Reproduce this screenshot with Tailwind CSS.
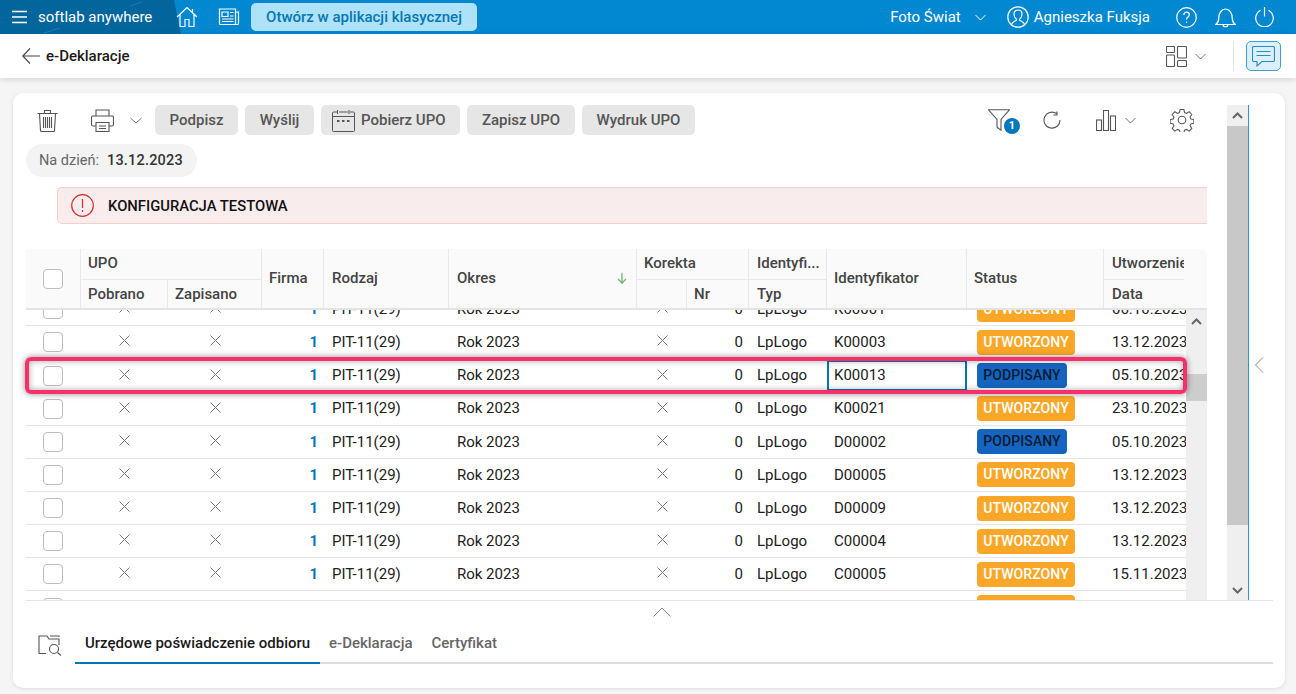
<!DOCTYPE html>
<html lang="pl">
<head>
    <meta charset="UTF-8">
    <title>e-Deklaracje</title>
    <script src="https://cdn.jsdelivr.net/npm/@tailwindcss/browser@4"></script>
</head>
<body class="font-['Roboto',sans-serif] bg-[#f5f5f5] h-[694px] overflow-hidden text-[#212121] text-[15px]">
    <!-- top bar -->
    <header class="relative h-[34px] bg-[#0288d1] text-white flex items-center overflow-hidden">
        <div class="absolute inset-y-0 left-0 w-[181px] bg-[#02669d] [clip-path:polygon(0_0,174px_0,181px_100%,0_100%)]"></div>
        <svg class="absolute left-0 top-0 w-[181px] h-[34px]" fill="none" stroke="#ffffff" stroke-opacity=".12" stroke-width="1"><path d="M142 2l-12 4M60 28l-16 5"/></svg>
        <div class="relative flex items-center w-full">
            <svg class="w-[16px] h-[14px] ml-[12px]" fill="none" stroke="currentColor" stroke-width="1.6" viewBox="0 0 16 14"><path d="M0 1.5h15M0 7h15M0 12.5h15"/></svg>
            <span class="ml-[10px] w-[138px] text-[15px]">softlab anywhere</span>
            <svg class="w-[22px] h-[22px]" fill="none" stroke="currentColor" stroke-width="1.2" viewBox="0 0 22 22"><path d="M1 11L11 1.5 21 11M4 8.500V20.500H9V13.500H13V20.500H18V8.500M16.500 3V6"/></svg>
            <svg class="ml-[20px] w-[22px] h-[18px]" fill="none" stroke="currentColor" stroke-width="1.2" viewBox="0 0 22 18"><path d="M1.500 1h16v15.500h-15a1 1 0 0 1-1-1zM17.500 4h3v11.500a1 1 0 0 1-1 1h-2M4 4h6v4.500H4zM12 4.500h3.500M12 8h3.500M4 11h11.500M4 13.500h11.500"/></svg>
            <button class="ml-[11px] w-[226px] h-[28px] rounded-[5px] bg-[#aee2f8] text-[#0277b5] font-medium text-[15px]">Otwórz w aplikacji klasycznej</button>
            <span class="ml-auto text-[15px]">Foto Świat</span>
            <svg class="ml-[14px] w-[11px] h-[7px]" fill="none" stroke="currentColor" stroke-width="1" viewBox="0 0 11 7"><path d="M.5 1l5 5 5-5"/></svg>
            <svg class="ml-[21px] w-[22px] h-[22px]" fill="none" stroke="currentColor" stroke-width="1.200" viewBox="0 0 22 22"><circle cx="11" cy="11" r="10.200"/><path d="M4.500 18.500c.5-2.500 2.500-3 4.500-4 .5-.5.500-1 .2-1.500C7.500 11.500 7 9.500 7 8c0-2.500 1.800-4 4-4s4 1.500 4 4c0 1.500-.5 3.500-2.200 5-.3.500-.3 1 .2 1.500 2 1 4 1.500 4.500 4"/></svg>
            <span class="ml-[5px] text-[15px]">Agnieszka Fuksja</span>
            <svg class="ml-[26px] w-[21px] h-[21px]" fill="none" stroke="currentColor" stroke-width="1.200" viewBox="0 0 21 21"><circle cx="10.500" cy="10.500" r="9.800"/><path d="M7.800 8c0-1.700 1.200-2.800 2.800-2.800s2.700 1 2.700 2.500c0 2.300-2.800 2.300-2.800 4.800M10.500 14.500v1.500"/></svg>
            <svg class="ml-[18px] w-[21px] h-[21px]" fill="none" stroke="currentColor" stroke-width="1.200" viewBox="0 0 21 21"><path d="M.8 17.500c2-1.500 3-3 3-6.500 0-4.500 2.500-9 6.700-9s6.700 4.500 6.700 9c0 3.500 1 5 3 6.500zM8 17.500c0 3 5 3 5 0"/></svg>
            <svg class="ml-[19px] mr-[22px] w-[19px] h-[20px]" fill="none" stroke="currentColor" stroke-width="1.200" viewBox="0 0 19 20"><path d="M5.500 3.300a8.800 8.800 0 1 0 8 0M9.500 0v9.500"/></svg>
        </div>
    </header>

    <!-- page title bar -->
    <div class="relative h-[44px] bg-white shadow-[0_2px_6px_rgba(0,0,0,0.12)] flex items-center">
        <svg class="ml-[22px] w-[18px] h-[16px]" fill="none" stroke="#444444" stroke-width="1.100" viewBox="0 0 18 16"><path d="M8 .5L.8 8 8 15.500M.8 8H18"/></svg>
        <span class="ml-[6px] font-medium text-[15px] text-[#1a1a1a]">e-Deklaracje</span>
        <svg class="ml-auto w-[21px] h-[21px]" fill="none" stroke="#555555" stroke-width="1.100" viewBox="0 0 21 21"><rect x=".5" y=".5" width="8" height="6" rx="1"/><rect x=".5" y="9" width="8" height="11.500" rx="1"/><rect x="11.500" y=".5" width="9" height="11.500" rx="1"/><rect x="11.500" y="14.500" width="9" height="6" rx="1"/></svg>
        <svg class="ml-[8px] w-[11px] h-[7px]" fill="none" stroke="#777777" stroke-width="1" viewBox="0 0 11 7"><path d="M.5 1l5 5 5-5"/></svg>
        <div class="ml-[27px] w-px h-[30px] bg-[#e3e3e3]"></div>
        <button class="ml-[12px] mr-[15px] w-[35px] h-[30px] rounded-[5px] border border-[#3c9fd8] bg-[#dbf0fc] flex items-center justify-center">
            <svg class="w-[23px] h-[21px]" fill="none" stroke="#2a8cc7" stroke-width="1.100" viewBox="0 0 23 21"><path d="M2 .5h19a1.500 1.500 0 0 1 1.500 1.500v12a1.500 1.500 0 0 1-1.500 1.500H10l-5 4.500v-4.500H2A1.500 1.500 0 0 1 .5 14V2A1.500 1.500 0 0 1 2 .5zM4.500 5.500h14M4.500 9.500h14"/></svg>
        </button>
    </div>

    <!-- main card -->
    <main class="mt-[15px] ml-[13px] w-[1272px] h-[595px] bg-white rounded-[10px] shadow-[0_1px_4px_rgba(0,0,0,0.1)] flex flex-col">
        <div class="relative h-[507px] flex">
            <div class="w-[1214px] pl-[13px] pt-[12px] shrink-0">
                <!-- toolbar -->
                <div class="h-[30px] flex items-center text-[#555555]">
                    <svg class="ml-[11px] w-[21px] h-[23px]" fill="none" stroke="#555555" stroke-width="1.100" viewBox="0 0 21 23"><path d="M.5 4.500h20M7.500 4.500V1.500h6v3M2.500 4.500l1 17a1 1 0 0 0 1 1h12a1 1 0 0 0 1-1l1-17M6.500 8v11M8.500 8v11M10.500 8v11M12.500 8v11M14.500 8v11"/></svg>
                    <svg class="ml-[33px] w-[23px] h-[23px]" fill="none" stroke="#555555" stroke-width="1.100" viewBox="0 0 23 23"><path d="M5 7V1h13v6M5 17H2a1.500 1.500 0 0 1-1.500-1.500v-7A1.500 1.500 0 0 1 2 7h19a1.500 1.500 0 0 1 1.500 1.500v7A1.500 1.500 0 0 1 21 17h-3M5 13.500h13v9H5zM8 17h7M8 19.500h7"/></svg>
                    <svg class="ml-[16px] w-[12px] h-[7px]" fill="none" stroke="#777777" stroke-width="1" viewBox="0 0 12 7"><path d="M.5 1l5.500 5 5.500-5"/></svg>
                    <button class="ml-[13px] w-[83px] h-[30px] rounded-[5px] bg-[#e6e6e6] font-medium">Podpisz</button>
                    <button class="ml-[7px] w-[69px] h-[30px] rounded-[5px] bg-[#e6e6e6] font-medium">Wyślij</button>
                    <button class="ml-[7px] w-[139px] h-[30px] rounded-[5px] bg-[#e6e6e6] font-medium flex items-center pl-[11px] gap-[6px]">
                        <svg class="w-[23px] h-[23px]" fill="none" stroke="#555555" stroke-width="1" viewBox="0 0 23 23"><path d="M5 3H1.500a1 1 0 0 0-1 1v17.500a1 1 0 0 0 1 1h20a1 1 0 0 0 1-1V4a1 1 0 0 0-1-1H18M7 3h9M5.500 1v4M17 1v4M.5 7.500h22"/><path stroke-width="2.200" d="M5 12h2.500M10 12h2.500M15 12h2.500"/></svg>
                        <span>Pobierz UPO</span>
                    </button>
                    <button class="ml-[7px] w-[108px] h-[30px] rounded-[5px] bg-[#e6e6e6] font-medium">Zapisz UPO</button>
                    <button class="ml-[7px] w-[113px] h-[30px] rounded-[5px] bg-[#e6e6e6] font-medium">Wydruk UPO</button>
                    <div class="relative ml-[293px] w-[22px] h-[23px]">
                        <svg class="w-[22px] h-[22px]" fill="none" stroke="#555555" stroke-width="1.100" viewBox="0 0 22 22"><path d="M.5.800h21L13 10.500v10.700l-4-3V10.500z"/></svg>
                        <span class="absolute left-[16px] top-[9px] w-[16px] h-[16px] rounded-full bg-[#0277bd] text-white text-[11px] font-bold leading-[16px] text-center">1</span>
                    </div>
                    <svg class="ml-[33px] w-[18px] h-[18px]" fill="none" stroke="#555555" stroke-width="1.100" viewBox="0 0 18 18"><path d="M13.500 2.500A8 8 0 1 0 17 9M14 .5v3.500h-3.500"/></svg>
                    <svg class="ml-[35px] w-[20px] h-[21px]" fill="none" stroke="#555555" stroke-width="1.100" viewBox="0 0 20 21"><rect x=".5" y="10" width="5" height="10.500"/><rect x="7.500" y=".5" width="5" height="20"/><rect x="14.500" y="6" width="5" height="14.500"/></svg>
                    <svg class="ml-[9px] w-[11px] h-[7px]" fill="none" stroke="#777777" stroke-width="1" viewBox="0 0 11 7"><path d="M.5 1l5 5 5-5"/></svg>
                    <svg class="ml-[34px] w-[24px] h-[24px]" fill="none" stroke="#555555" stroke-width="1.100" viewBox="0 0 24 24"><circle cx="12" cy="12" r="3.800"/><path d="M10 1h4l.7 3.200 2 .9L19.500 3.300l2.800 2.900-1.800 2.700.8 2 3.200.6v4l-3.200.6-.8 2 1.800 2.700-2.800 2.900-2.800-1.800-2 .8-.7 2.800h-4l-.7-2.800-2-.8-2.800 1.800-2.800-2.900 1.800-2.700-.8-2-3.200-.6v-4l3.200-.6.800-2L1.700 6.200l2.800-2.900 2.800 1.800 2-.9z" transform="translate(.6 .6) scale(.95)"/></svg>
                </div>

                <div class="mt-[9px] w-[171px] h-[33px] rounded-full bg-[#f3f3f3] flex items-center pl-[13px] pt-[1px]">
                    <span class="text-[#666666] text-[14.500px]">Na dzień:</span>
                    <span class="ml-[8px] font-medium text-[#333333] text-[14.500px] tracking-[0.2px]">13.12.2023</span>
                </div>

                <!-- alert -->
                <div class="mt-[10px] ml-[31px] w-[1150px] h-[37px] rounded-l-[5px] bg-[#f9ecec] border border-r-0 border-[#f4cccc] flex items-center pl-[13px]">
                    <svg class="w-[23px] h-[23px]" fill="none" stroke="#d32f2f" stroke-width="1.200" viewBox="0 0 23 23"><circle cx="11.500" cy="11.500" r="10.800"/><path d="M11.500 5v9M11.500 16v2"/></svg>
                    <span class="ml-[14px] pt-[1px] font-medium text-[14.800px] text-[#111111]">KONFIGURACJA TESTOWA</span>
                </div>

                <!-- table -->
                <div class="relative mt-[25px] w-[1181px]">
                    <div class="h-[61px] bg-[#fafafa] rounded-tr-[6px] border-b-[2px] border-[#e4e4e4] text-[#444444] font-medium text-[15px]">
                        <div class="w-[1158px] h-[59px] overflow-hidden grid grid-cols-[55px_87px_94px_62px_125px_188px_50px_62px_78px_140px_137px_80px] grid-rows-[31px_28px]">
                            <div class="row-span-2 border-r border-[#e8e8e8] flex items-center pl-[17px]"><span class="block w-[20px] h-[20px] rounded-[4px] border border-[#bdbdbd] bg-white"></span></div>
                            <div class="col-span-2 border-r border-b border-[#e8e8e8] pl-[7px] pb-[2px] flex items-center">UPO</div>
                            <div class="row-span-2 border-r border-[#e8e8e8] pl-[7px] flex items-center">Firma</div>
                            <div class="row-span-2 border-r border-[#e8e8e8] pl-[8px] flex items-center">Rodzaj</div>
                            <div class="row-span-2 border-r border-[#e8e8e8] pl-[8px] pr-[9px] flex items-center justify-between">Okres<svg class="w-[10px] h-[11px]" fill="none" stroke="#66bb6a" stroke-width="1.300" viewBox="0 0 10 11"><path d="M5 0v10M1 6l4 4 4-4"/></svg></div>
                            <div class="col-span-2 border-r border-b border-[#e8e8e8] pl-[7px] pb-[2px] flex items-center">Korekta</div>
                            <div class="border-r border-b border-[#e8e8e8] pl-[8px] pb-[2px] flex items-center">Identyfi...</div>
                            <div class="row-span-2 border-r border-[#e8e8e8] pl-[7px] flex items-center">Identyfikator</div>
                            <div class="row-span-2 border-r border-[#e8e8e8] pl-[7px] flex items-center">Status</div>
                            <div class="border-b border-[#e8e8e8] pl-[8px] pb-[2px] flex items-center whitespace-nowrap overflow-hidden">Utworzenie</div>
                            <div class="col-start-2 border-r border-[#e8e8e8] pl-[7px] flex items-center">Pobrano</div>
                            <div class="border-r border-[#e8e8e8] pl-[7px] flex items-center">Zapisano</div>
                            <div class="col-start-7 border-r border-[#e8e8e8]"></div>
                            <div class="border-r border-[#e8e8e8] pl-[7px] flex items-center">Nr</div>
                            <div class="border-r border-[#e8e8e8] pl-[8px] flex items-center">Typ</div>
                            <div class="col-start-12 pl-[8px] flex items-center">Data</div>
                        </div>
                    </div>
                    <div class="flex h-[290px]">
                        <div id="rows" class="w-[1160px] h-[290px] overflow-hidden"></div>
                        <!-- table scrollbar -->
                        <div class="w-[21px] h-[290px] bg-[#efefef] flex flex-col items-center">
                            <svg class="mt-[8px] w-[11px] h-[7px]" fill="none" stroke="#666666" stroke-width="2" viewBox="0 0 11 7"><path d="M1 6l4.500-4.500L10 6"/></svg>
                            <div class="mt-[49px] w-full h-[27px] bg-[#cdcdcd]"></div>
                        </div>
                    </div>
                    <!-- highlighted row frame -->
                    <div class="absolute left-[-1px] top-[108px] w-[1162px] h-[37px] rounded-[6px] border-[4px] border-[#f72f6b] shadow-[0_0_6px_rgba(0,0,0,0.45),inset_0_0_6px_rgba(0,0,0,0.35)]"></div>
                </div>
            </div>
            <!-- page scrollbar -->
            <div class="mt-[12px] w-[21px] h-[495px] bg-[#efefef] flex flex-col items-center shrink-0">
                <div class="h-[21px] flex items-center"><svg class="w-[11px] h-[7px]" fill="none" stroke="#666666" stroke-width="2" viewBox="0 0 11 7"><path d="M1 6l4.500-4.500L10 6"/></svg></div>
                <div class="w-full h-[399px] bg-[#c8c8c8]"></div>
                <svg class="mt-auto mb-[6px] w-[11px] h-[7px]" fill="none" stroke="#666666" stroke-width="2" viewBox="0 0 11 7"><path d="M1 1l4.500 4.500L10 1"/></svg>
            </div>
            <div class="mt-[12px] w-px h-[495px] bg-[#2196d9]"></div>
            <svg class="ml-[5px] mt-[264px] w-[10px] h-[16px]" fill="none" stroke="#888888" stroke-width="1" viewBox="0 0 10 16"><path d="M9 .5L1.500 8 9 15.500"/></svg>
        </div>

        <!-- bottom tabs -->
        <div class="ml-[13px] mr-[12px] border-t border-[#e4e4e4]">
            <div class="h-[22px] flex items-center justify-center pl-[24px]">
                <svg class="w-[18px] h-[10px]" fill="none" stroke="#888888" stroke-width="1" viewBox="0 0 18 10"><path d="M.5 9.500L9 1l8.500 8.500"/></svg>
            </div>
            <div class="flex items-end mt-[9px]">
                <svg class="ml-[12px] mb-[8px] w-[25px] h-[22px]" fill="none" stroke="#555555" stroke-width="1.100" viewBox="0 0 25 22"><path d="M8 19.500H1V2h8l2 3h10v6M12 2h9v1M19.500 18.500l3.500 3"/><circle cx="16" cy="15" r="4.500"/></svg>
                <div class="ml-[12px] flex-1 flex border-b-[2px] border-[#dddddd] h-[32px] text-[15px] font-medium">
                    <div class="w-[245px] pl-[10px] border-b-[2px] border-[#0277b5] h-[32px] text-[#1a1a1a]">Urzędowe poświadczenie odbioru</div>
                    <div class="ml-[9px] text-[#666666]">e-Deklaracja</div>
                    <div class="ml-[19px] text-[#666666]">Certyfikat</div>
                </div>
            </div>
        </div>
    </main>

    <script>
        const data = [
            ['K00001', 'UTWORZONY', '06.10.2023'],
            ['K00003', 'UTWORZONY', '13.12.2023'],
            ['K00013', 'PODPISANY', '05.10.2023'],
            ['K00021', 'UTWORZONY', '23.10.2023'],
            ['D00002', 'PODPISANY', '05.10.2023'],
            ['D00005', 'UTWORZONY', '13.12.2023'],
            ['D00009', 'UTWORZONY', '13.12.2023'],
            ['C00004', 'UTWORZONY', '13.12.2023'],
            ['C00005', 'UTWORZONY', '15.11.2023'],
            ['C00006', 'UTWORZONY', '15.11.2023']
        ];
        const cross = `<svg class="w-[11px] h-[11px] mb-[3px]" fill="none" stroke="#777777" stroke-width="1" viewBox="0 0 11 11"><path d="M.5.500l10 10M10.500.500l-10 10"/></svg>`;
        const utw = 'w-[98px] bg-[#faa728] text-white';
        const pod = 'w-[90px] bg-[#1565c0] text-[#0b1b33]';
        document.getElementById('rows').innerHTML = data.map((r, i) => `
            <div class="${i === 0 ? 'mt-[-16.800px]' : ''} h-[33.150px] border-b border-[#e4e4e4] grid grid-cols-[55px_87px_94px_62px_125px_188px_50px_62px_78px_140px_137px_82px] items-center whitespace-nowrap">
                <div class="pl-[17px]"><span class="block w-[20px] h-[20px] rounded-[4px] border border-[#bdbdbd] bg-white"></span></div>
                <div class="flex justify-center pr-[0px]">${cross}</div>
                <div class="flex justify-center">${cross}</div>
                <div class="text-right pr-[6px] text-[#0277bd] font-bold">1</div>
                <div class="pl-[8px]">PIT-11(29)</div>
                <div class="pl-[8px]">Rok 2023</div>
                <div class="flex justify-center">${cross}</div>
                <div class="text-right pr-[6px]">0</div>
                <div class="pl-[8px]">LpLogo</div>
                <div class="h-[31px] pl-[5px] flex items-center border-2 ${r[0] === 'K00013' ? 'border-[#0277b0]' : 'border-transparent'}">${r[0]}</div>
                <div class="pl-[10px]"><span class="block h-[25px] rounded-[4px] text-center font-medium text-[14px] leading-[25px] tracking-[0.1px] ${r[1] === 'UTWORZONY' ? utw : pod}">${r[1]}</span></div>
                <div class="pl-[8px] overflow-hidden">${r[2]}</div>
            </div>`).join('');
    </script>
</body>
</html>
